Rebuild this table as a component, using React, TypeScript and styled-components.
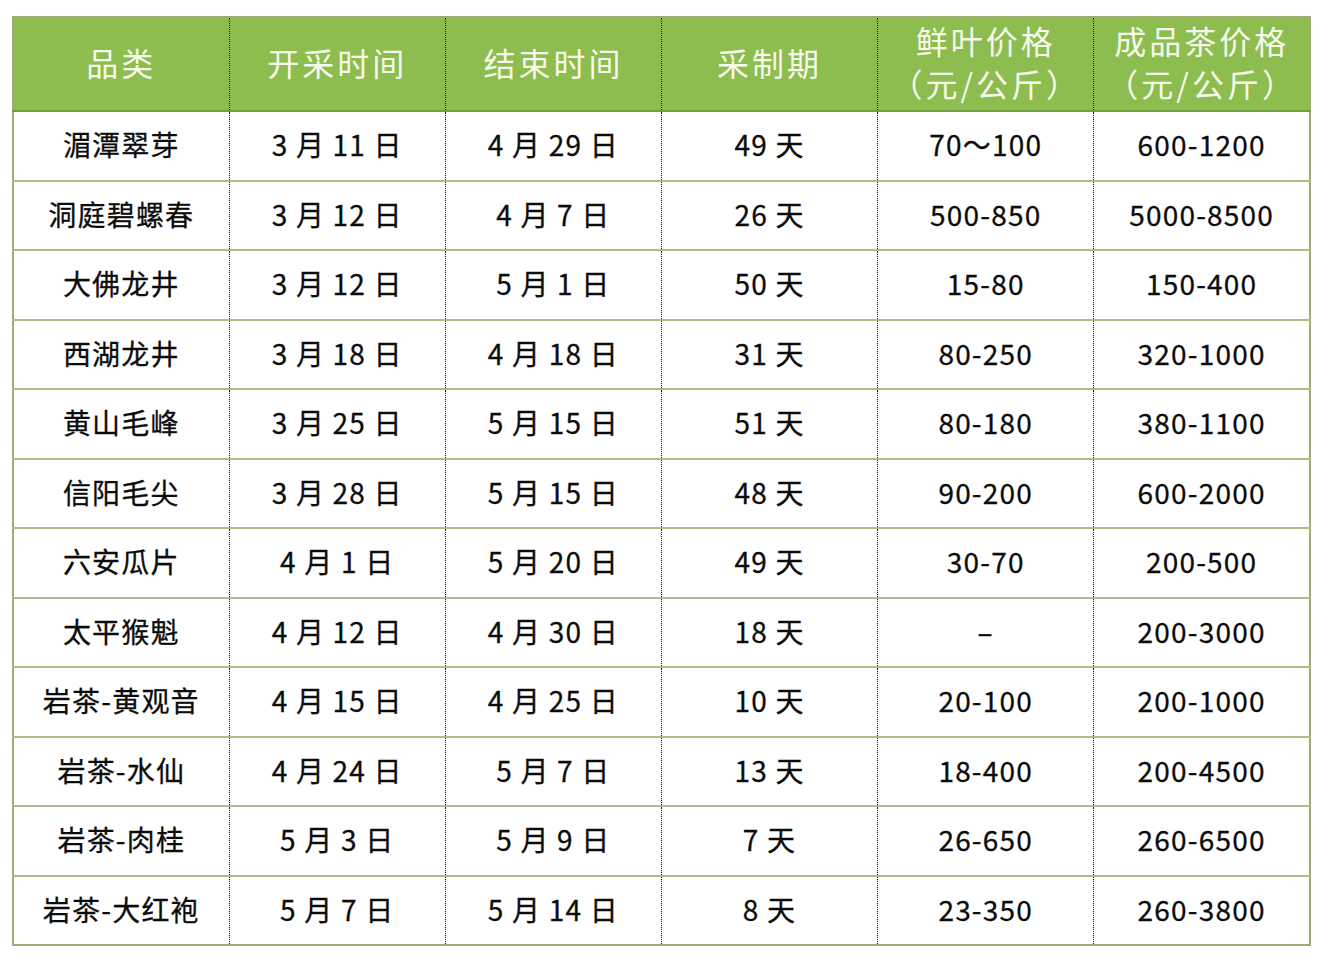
import { createGlobalStyle } from 'styled-components';
import styled from 'styled-components';

const GlobalStyle = createGlobalStyle`
  html, body {
    margin: 0;
    padding: 0;
    background: #ffffff;
  }
  body {
    font-family: "Noto Sans CJK SC", "Noto Sans", sans-serif;
  }
`;

const Page = styled.div`
  padding: 16px 0 0 12px;
  width: 1328px;
  height: 960px;
  box-sizing: border-box;
`;

const Table = styled.table`
  border-collapse: collapse;
  width: 1299px;
  table-layout: fixed;
  border: 2px solid #a3a878;
`;

const HeadCell = styled.th`
  height: 88px;
  padding: 0 0 4px;
  background: #8dbd4f;
  color: #f6faec;
  font-weight: 400;
  font-size: 32px;
  line-height: 43px;
  letter-spacing: 3px;
  text-align: center;
  vertical-align: middle;
  border-bottom: 2px solid #739f3d;
  border-left: 1px dotted #111111;
  &:first-child {
    border-left: none;
  }
`;

const Cell = styled.td`
  height: 64.5px;
  padding: 0 0 3px;
  color: #0c0c0c;
  font-weight: 400;
  font-size: 28px;
  letter-spacing: 1.2px;
  text-align: center;
  vertical-align: middle;
  -webkit-text-stroke: 0.3px #0c0c0c;
  border-top: 2px solid #b4b98a;
  border-left: 1px dotted #111111;
  &:first-child {
    border-left: none;
  }
`;

const headers = ['品类', '开采时间', '结束时间', '采制期', '鲜叶价格\n（元/公斤）', '成品茶价格\n（元/公斤）'];

const rows = [
  ['湄潭翠芽', '3 月 11 日', '4 月 29 日', '49 天', '70～100', '600-1200'],
  ['洞庭碧螺春', '3 月 12 日', '4 月 7 日', '26 天', '500-850', '5000-8500'],
  ['大佛龙井', '3 月 12 日', '5 月 1 日', '50 天', '15-80', '150-400'],
  ['西湖龙井', '3 月 18 日', '4 月 18 日', '31 天', '80-250', '320-1000'],
  ['黄山毛峰', '3 月 25 日', '5 月 15 日', '51 天', '80-180', '380-1100'],
  ['信阳毛尖', '3 月 28 日', '5 月 15 日', '48 天', '90-200', '600-2000'],
  ['六安瓜片', '4 月 1 日', '5 月 20 日', '49 天', '30-70', '200-500'],
  ['太平猴魁', '4 月 12 日', '4 月 30 日', '18 天', '–', '200-3000'],
  ['岩茶-黄观音', '4 月 15 日', '4 月 25 日', '10 天', '20-100', '200-1000'],
  ['岩茶-水仙', '4 月 24 日', '5 月 7 日', '13 天', '18-400', '200-4500'],
  ['岩茶-肉桂', '5 月 3 日', '5 月 9 日', '7 天', '26-650', '260-6500'],
  ['岩茶-大红袍', '5 月 7 日', '5 月 14 日', '8 天', '23-350', '260-3800'],
];

export default function App() {
  return (
    <Page>
      <GlobalStyle />
      <Table>
        <thead>
          <tr>
            {headers.map((h) => (
              <HeadCell key={h}>
                {h.split('\n').map((line, i) => (
                  <div key={i}>{line}</div>
                ))}
              </HeadCell>
            ))}
          </tr>
        </thead>
        <tbody>
          {rows.map((r) => (
            <tr key={r[0]}>
              {r.map((c, i) => (
                <Cell key={i}>{c}</Cell>
              ))}
            </tr>
          ))}
        </tbody>
      </Table>
    </Page>
  );
}
